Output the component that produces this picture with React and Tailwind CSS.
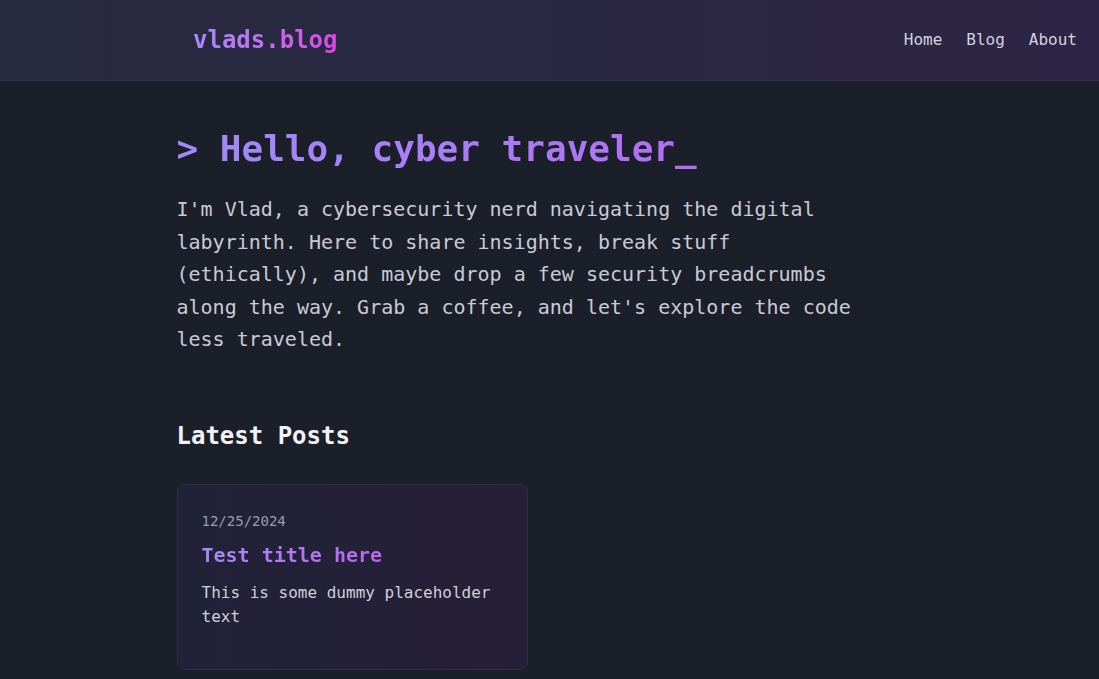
import React from "react";

const mono = { fontFamily: '"DejaVu Sans Mono", "Liberation Mono", monospace' };

const posts = [
    {
        date: "12/25/2024",
        title: "Test title here",
        excerpt: "This is some dummy placeholder text",
    },
];

const PostCard = ({ post }) => (
    <div className="rounded-lg border border-[#302c4a] bg-gradient-to-r from-[#212238] to-[#261f38] px-6 pt-[26px] pb-10">
        <p className="text-sm leading-5 text-[#9b9cab] mb-2.5">{post.date}</p>
        <h3 className="text-xl leading-7 font-bold bg-gradient-to-r from-[#a689f7] to-[#b866ee] bg-clip-text text-transparent w-fit mb-3">
            {post.title}
        </h3>
        <p className="text-base leading-6 text-[#cfcfda]">{post.excerpt}</p>
    </div>
);

export default function App() {
    return (
        <div className="min-h-screen bg-[#1b1f2a]" style={mono}>
            <header className="h-[81px] flex items-center justify-between pl-[193px] pr-[22px] bg-gradient-to-r from-[#282a41] to-[#2d2545] border-b border-[#37324f]">
                <a className="text-2xl font-bold bg-gradient-to-r from-[#a48bf8] to-[#db44e6] bg-clip-text text-transparent">
                    vlads.blog
                </a>
                <nav className="flex items-center gap-6 text-base text-[#d2d1de]">
                    <a>Home</a>
                    <a>Blog</a>
                    <a>About</a>
                </nav>
            </header>

            <main className="max-w-3xl mx-auto px-[11px] pt-12 pb-12">
                <h1 className="text-4xl leading-10 font-bold bg-gradient-to-r from-[#a08bf8] to-[#b16ff3] bg-clip-text text-transparent w-fit mb-6">
                    &gt; Hello, cyber traveler_
                </h1>
                <p className="max-w-[678px] text-xl leading-[32.5px] text-[#cacad4]">
                    I'm Vlad, a cybersecurity nerd navigating the digital labyrinth. Here to share insights, break stuff (ethically), and maybe drop a few security breadcrumbs along the way. Grab a coffee, and let's explore the code less traveled.
                </p>

                <section className="mt-16">
                    <h2 className="text-2xl leading-8 font-semibold text-[#f2f2f5] mb-8">Latest Posts</h2>
                    <div className="grid grid-cols-[351px_351px] gap-6">
                        {posts.map((p) => (
                            <PostCard key={p.title} post={p} />
                        ))}
                    </div>
                </section>
            </main>
        </div>
    );
}
